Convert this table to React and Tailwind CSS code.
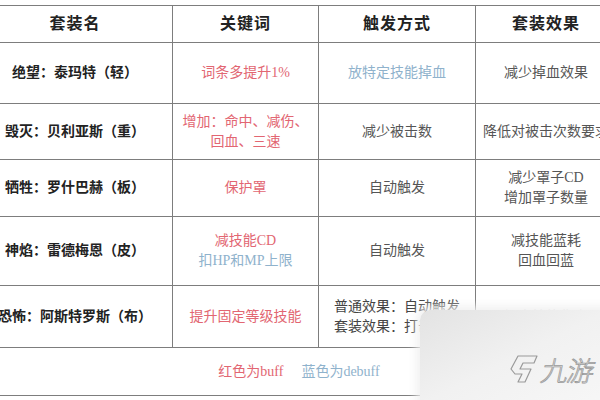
import React from "react";

const cols = "grid grid-cols-[194px_146px_157px_141px]";
const cell = "flex flex-col items-center justify-center text-center leading-[20px]";
const red = "text-[#e26672]";
const blue = "text-[#8fb2cc]";
const gray = "text-[#555]";

function Row({ h, children }) {
  return (
    <div className={`${cols} border-t border-[#7d7d7d]`} style={{ height: h }}>
      {children}
    </div>
  );
}

export default function App() {
  return (
    <div
      className="relative w-[600px] h-[400px] overflow-hidden bg-white text-[14px]"
      style={{ fontFamily: '"Liberation Serif", "Noto Sans CJK SC", serif' }}
    >
      <div className="ml-[-22px] mt-[5px] w-[638px]">
        <Row h={37}>
          <div className={`${cell} text-[16px] font-bold text-[#222] tracking-[1px]`}>套装名</div>
          <div className={`${cell} border-l border-[#7d7d7d] text-[16px] font-bold text-[#222] tracking-[1px]`}>关键词</div>
          <div className={`${cell} border-l border-[#7d7d7d] text-[16px] font-bold text-[#222] tracking-[1px]`}>触发方式</div>
          <div className={`${cell} border-l border-[#7d7d7d] text-[16px] font-bold text-[#222] tracking-[1px]`}>套装效果</div>
        </Row>
        <Row h={61}>
          <div className={`${cell} font-bold text-[#222]`}>绝望：泰玛特（轻）</div>
          <div className={`${cell} border-l border-[#7d7d7d] ${red}`}>词条多提升1%</div>
          <div className={`${cell} border-l border-[#7d7d7d] ${blue}`}>放特定技能掉血</div>
          <div className={`${cell} border-l border-[#7d7d7d] ${gray}`}>减少掉血效果</div>
        </Row>
        <Row h={56}>
          <div className={`${cell} font-bold text-[#222]`}>毁灭：贝利亚斯（重）</div>
          <div className={`${cell} border-l border-[#7d7d7d] ${red}`}>
            <span className="whitespace-nowrap">增加：命中、减伤、</span>
            <span>回血、三速</span>
          </div>
          <div className={`${cell} border-l border-[#7d7d7d] ${gray}`}>减少被击数</div>
          <div className={`${cell} border-l border-[#7d7d7d] ${gray} whitespace-nowrap`}>降低对被击次数要求</div>
        </Row>
        <Row h={57}>
          <div className={`${cell} font-bold text-[#222]`}>牺牲：罗什巴赫（板）</div>
          <div className={`${cell} border-l border-[#7d7d7d] ${red}`}>保护罩</div>
          <div className={`${cell} border-l border-[#7d7d7d] ${gray}`}>自动触发</div>
          <div className={`${cell} border-l border-[#7d7d7d] ${gray}`}>
            <span>减少罩子CD</span>
            <span>增加罩子数量</span>
          </div>
        </Row>
        <Row h={69}>
          <div className={`${cell} font-bold text-[#222]`}>神焰：雷德梅恩（皮）</div>
          <div className={`${cell} border-l border-[#7d7d7d]`}>
            <span className={red}>减技能CD</span>
            <span className={blue}>扣HP和MP上限</span>
          </div>
          <div className={`${cell} border-l border-[#7d7d7d] ${gray}`}>自动触发</div>
          <div className={`${cell} border-l border-[#7d7d7d] ${gray}`}>
            <span>减技能蓝耗</span>
            <span>回血回蓝</span>
          </div>
        </Row>
        <Row h={62}>
          <div className={`${cell} font-bold text-[#222] whitespace-nowrap`}>恐怖：阿斯特罗斯（布）</div>
          <div className={`${cell} border-l border-[#7d7d7d] ${red}`}>提升固定等级技能</div>
          <div className={`${cell} border-l border-[#7d7d7d] text-[#444]`}>
            <span className="whitespace-nowrap">普通效果：自动触发</span>
            <span className="whitespace-nowrap">套装效果：打击触发</span>
          </div>
          <div className={`${cell} border-l border-[#7d7d7d] text-[#ddd]`}>
            <span>提高技能伤害</span>
          </div>
        </Row>
        <div className="flex h-[49px] items-center justify-center gap-[18px] border-t border-b border-[#7d7d7d] pl-[4px]">
          <span className={red}>红色为buff</span>
          <span className={blue}>蓝色为debuff</span>
        </div>
      </div>

      {/* watermark */}
      <div className="absolute left-[420px] top-[310px] w-[190px] h-[95px] rounded-tl-[10px] bg-gradient-to-br from-[#e3e3e3] via-[#f1f1f1] to-[#f7f7f7] shadow-[0_0_8px_4px_rgba(240,240,240,0.9)]">
        <div className="absolute left-[89px] top-[44px] flex items-center gap-[3px]">
          <svg width="30" height="30" viewBox="0 0 30 30" fill="none" stroke="#9a9a9a" strokeWidth="1.2" strokeLinejoin="round">
            <path d="M9 2 L28 2 L25 9 L14 9 L11 15 L22 15 L16 28 L9 28 L13 20 L6 20 L2 15 Z" />
          </svg>
          <span
            className="inline-block -skew-x-12 text-[27px] leading-none text-transparent [-webkit-text-stroke:0.8px_#9a9a9a] tracking-[-1px]"
            style={{ fontFamily: '"Noto Sans CJK SC", sans-serif', fontWeight: 200 }}
          >
            九游
          </span>
        </div>
      </div>
    </div>
  );
}
